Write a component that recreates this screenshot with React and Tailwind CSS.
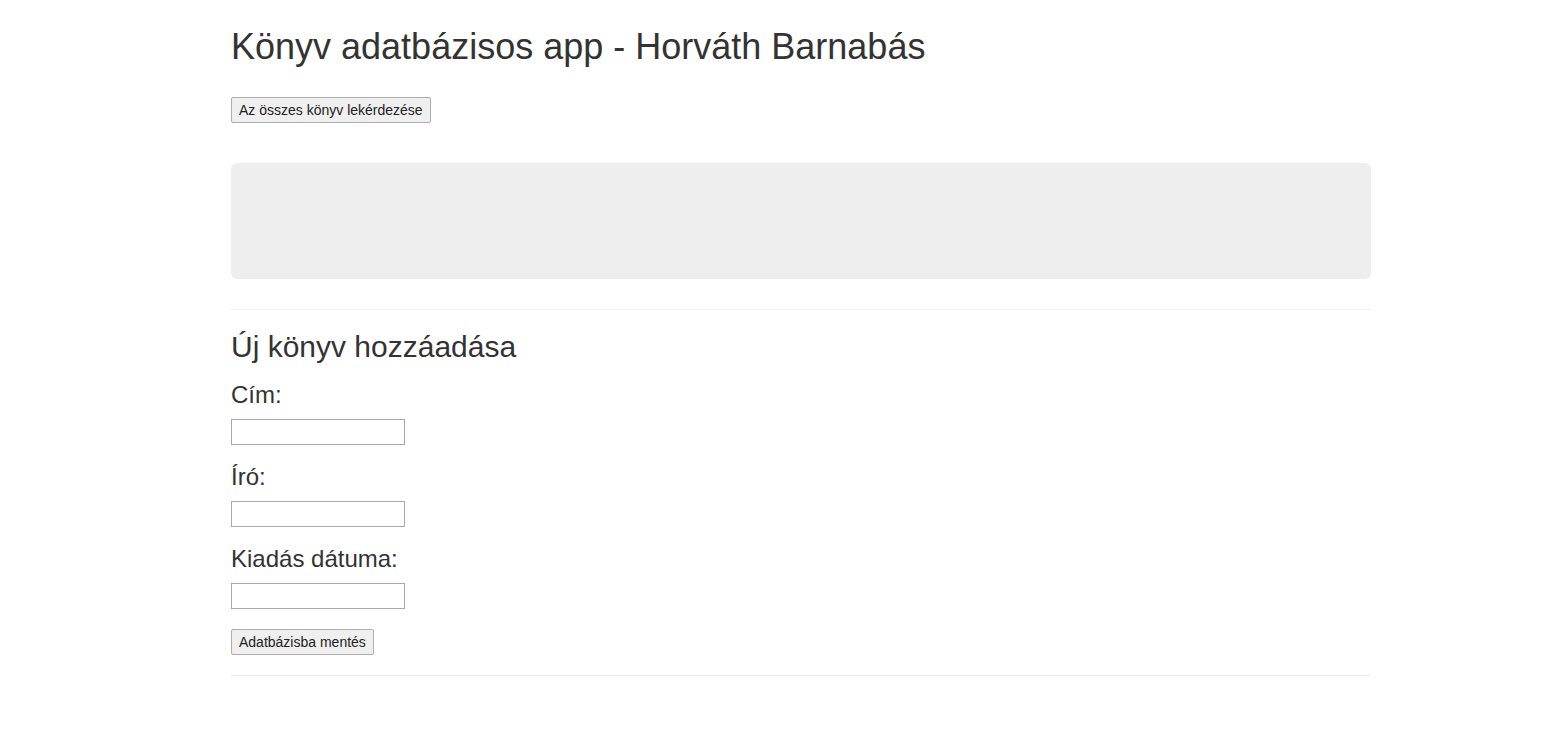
import React, { useState } from 'react';

function Field({ label, value, onChange }) {
    return (
        <div className="flex flex-col">
            <label className="block text-[24px] leading-[28px]">{label}</label>
            <input
                type="text"
                value={value}
                onChange={(e) => onChange(e.target.value)}
                className="mt-[10px] w-[174px] h-[26px] border border-[#a9a9a9] bg-white px-[2px] text-[13.33px] outline-none"
            />
        </div>
    );
}

function App() {
    const [title, setTitle] = useState('');
    const [author, setAuthor] = useState('');
    const [date, setDate] = useState('');

    return (
        <div className="min-h-screen bg-white text-[#333] font-['Liberation_Sans',Arial,sans-serif]">
            <div className="ml-[231px] w-[1140px] pt-[27px]">
                <h1 className="text-[36px] leading-[40px]">Könyv adatbázisos app - Horváth Barnabás</h1>

                <button className="mt-[30px] h-[26px] px-[7px] border border-[#adadad] bg-[#efefef] text-[14px] text-[#222] rounded-[2px] whitespace-nowrap">
                    Az összes könyv lekérdezése
                </button>

                {/* lista helye */}
                <div className="mt-[40px] h-[116px] rounded-md bg-[#eee]"></div>

                <hr className="mt-[30px] border-t border-[#eee]" />

                <h2 className="mt-[20px] text-[30px] leading-[33px]">Új könyv hozzáadása</h2>

                <div className="mt-[18px] flex flex-col gap-[18px]">
                    <Field label="Cím:" value={title} onChange={setTitle} />
                    <Field label="Író:" value={author} onChange={setAuthor} />
                    <Field label="Kiadás dátuma:" value={date} onChange={setDate} />
                </div>

                <button className="mt-[20px] h-[26px] px-[7px] border border-[#adadad] bg-[#efefef] text-[14px] text-[#222] rounded-[2px] whitespace-nowrap">
                    Adatbázisba mentés
                </button>

                <hr className="mt-[20px] border-t border-[#eee]" />
            </div>
        </div>
    );
}

export default App;
